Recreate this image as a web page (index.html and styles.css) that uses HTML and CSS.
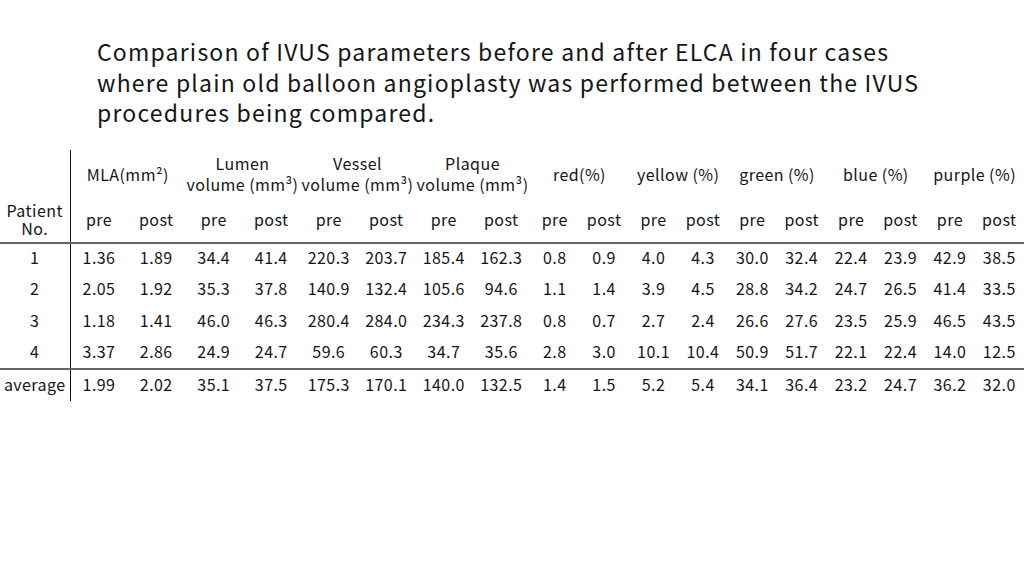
FILE: index.html
```html
<!DOCTYPE html>
<html>
<head>
<meta charset="utf-8">
<link rel="stylesheet" href="styles.css">
</head>
<body>
<div class="slide">
  <h1 class="title">Comparison of IVUS parameters before and after ELCA in four cases<br>where plain old balloon angioplasty was performed between the IVUS<br>procedures being compared.</h1>
  <table class="data">
    <colgroup>
      <col class="c-pt">
      <col class="c-w"><col class="c-w"><col class="c-w"><col class="c-w">
      <col class="c-w"><col class="c-w"><col class="c-w"><col class="c-w">
      <col class="c-n"><col class="c-n"><col class="c-n"><col class="c-n"><col class="c-n">
      <col class="c-n"><col class="c-n"><col class="c-n"><col class="c-n"><col class="c-n">
    </colgroup>
    <thead>
      <tr class="h1">
        <th class="pt"></th>
        <th colspan="2">MLA(mm²)</th>
        <th colspan="2">Lumen<br>volume (mm³)</th>
        <th colspan="2">Vessel<br>volume (mm³)</th>
        <th colspan="2">Plaque<br>volume (mm³)</th>
        <th colspan="2">red(%)</th>
        <th colspan="2">yellow (%)</th>
        <th colspan="2">green (%)</th>
        <th colspan="2">blue (%)</th>
        <th colspan="2">purple (%)</th>
      </tr>
      <tr class="h2">
        <th class="pt pt-label">Patient<br>No.</th>
        <th>pre</th><th>post</th><th>pre</th><th>post</th><th>pre</th><th>post</th><th>pre</th><th>post</th>
        <th>pre</th><th>post</th><th>pre</th><th>post</th><th>pre</th><th>post</th><th>pre</th><th>post</th><th>pre</th><th>post</th>
      </tr>
    </thead>
    <tbody>
      <tr>
        <td class="pt">1</td>
        <td>1.36</td><td>1.89</td><td>34.4</td><td>41.4</td><td>220.3</td><td>203.7</td><td>185.4</td><td>162.3</td>
        <td>0.8</td><td>0.9</td><td>4.0</td><td>4.3</td><td>30.0</td><td>32.4</td><td>22.4</td><td>23.9</td><td>42.9</td><td>38.5</td>
      </tr>
      <tr>
        <td class="pt">2</td>
        <td>2.05</td><td>1.92</td><td>35.3</td><td>37.8</td><td>140.9</td><td>132.4</td><td>105.6</td><td>94.6</td>
        <td>1.1</td><td>1.4</td><td>3.9</td><td>4.5</td><td>28.8</td><td>34.2</td><td>24.7</td><td>26.5</td><td>41.4</td><td>33.5</td>
      </tr>
      <tr>
        <td class="pt">3</td>
        <td>1.18</td><td>1.41</td><td>46.0</td><td>46.3</td><td>280.4</td><td>284.0</td><td>234.3</td><td>237.8</td>
        <td>0.8</td><td>0.7</td><td>2.7</td><td>2.4</td><td>26.6</td><td>27.6</td><td>23.5</td><td>25.9</td><td>46.5</td><td>43.5</td>
      </tr>
      <tr>
        <td class="pt">4</td>
        <td>3.37</td><td>2.86</td><td>24.9</td><td>24.7</td><td>59.6</td><td>60.3</td><td>34.7</td><td>35.6</td>
        <td>2.8</td><td>3.0</td><td>10.1</td><td>10.4</td><td>50.9</td><td>51.7</td><td>22.1</td><td>22.4</td><td>14.0</td><td>12.5</td>
      </tr>
      <tr class="avg">
        <td class="pt">average</td>
        <td>1.99</td><td>2.02</td><td>35.1</td><td>37.5</td><td>175.3</td><td>170.1</td><td>140.0</td><td>132.5</td>
        <td>1.4</td><td>1.5</td><td>5.2</td><td>5.4</td><td>34.1</td><td>36.4</td><td>23.2</td><td>24.7</td><td>36.2</td><td>32.0</td>
      </tr>
    </tbody>
  </table>
</div>
</body>
</html>
```
FILE: styles.css
```css
html, body {
  margin: 0;
  padding: 0;
  background: #ffffff;
}
.slide {
  width: 1024px;
  height: 576px;
  overflow: hidden;
  font-family: "Noto Sans CJK JP", "Noto Sans", sans-serif;
  color: #151515;
}
.title {
  margin: 0;
  padding: 36px 0 0 97px;
  font-size: 23px;
  font-weight: 400;
  letter-spacing: 1.2px;
  line-height: 30.5px;
  height: 114px;
  box-sizing: border-box;
  white-space: nowrap;
}
.data {
  border-collapse: collapse;
  table-layout: fixed;
  width: 1024px;
  margin-top: 36px;
  font-size: 16px;
  letter-spacing: 0.45px;
}
.c-pt { width: 70px; }
.c-w { width: 57.5px; }
.c-n { width: 49.4px; }
.data th, .data td {
  padding: 0;
  text-align: center;
  font-weight: 400;
  white-space: nowrap;
}
.data .pt {
  border-right: 1px solid #111;
}
.h1 th {
  height: 48px;
  line-height: 21px;
}
.h2 th {
  height: 42px;
  line-height: 18px;
  padding-bottom: 2px;
}
.data thead tr.h2 th {
  border-bottom: 2px solid #666;
}
.data tbody tr {
  height: 31.6px;
}
.data tbody td {
  line-height: 20px;
  padding-bottom: 4px;
}
.data tbody tr.avg td {
  border-top: 2px solid #666;
}
```
